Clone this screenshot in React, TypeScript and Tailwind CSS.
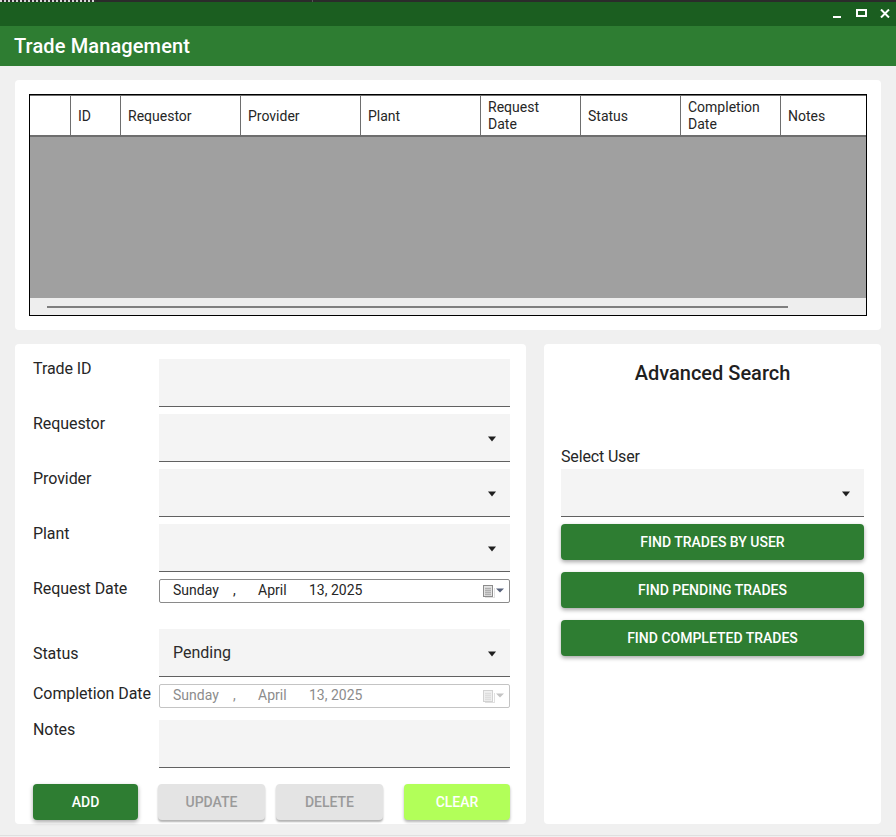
const columns = [
  { label: '', width: 'w-[41px]' },
  { label: 'ID', width: 'w-[50px]' },
  { label: 'Requestor', width: 'w-[120px]' },
  { label: 'Provider', width: 'w-[120px]' },
  { label: 'Plant', width: 'w-[120px]' },
  { label: 'Request Date', width: 'w-[100px]' },
  { label: 'Status', width: 'w-[100px]' },
  { label: 'Completion Date', width: 'w-[100px]' },
  { label: 'Notes', width: 'w-[85px]' },
];

function Caret() {
  return (
    <svg width="10" height="6" viewBox="0 0 10 6" className="shrink-0 mt-[2px]">
      <path d="M1 0.5h8L5 5.5z" fill="#1f1f1f" />
    </svg>
  );
}

function TextField() {
  return <div className="h-[48px] w-[351px] bg-[#f4f4f4] border-b border-[#616161]" />;
}

function ComboBox({ value, wide }: { value?: string; wide?: boolean }) {
  return (
    <div
      className={`h-[48px] ${
        wide ? 'w-[303px]' : 'w-[351px]'
      } bg-[#f4f4f4] border-b border-[#616161] flex items-center justify-between pl-[14px] pr-[13px]`}
    >
      <span className="text-[16px] text-[#2b2b2b]">{value}</span>
      <Caret />
    </div>
  );
}

function CalendarIcon({ disabled }: { disabled?: boolean }) {
  const stroke = disabled ? '#d2d2d2' : '#8c8c8c';
  const fill = disabled ? '#f0f0f0' : '#e4e4e4';
  const grid = disabled ? '#dcdcdc' : '#a8a8a8';
  const arrow = disabled ? '#c4c4c4' : '#56607a';
  return (
    <svg width="21" height="14" viewBox="0 0 21 14" className="shrink-0">
      <path d="M2 13.5h9.5V4" fill="none" stroke="#000" strokeOpacity="0.12" />
      <rect x="0.5" y="1.5" width="9" height="11" fill={fill} stroke={stroke} />
      <path d="M2 4.5h6M2 6.5h6M2 8.5h6M2 10.5h6M3 3.5v8M5 3.5v8M7 3.5v8" stroke={grid} strokeWidth="0.8" />
      <path d="M13 4.5h8l-4 4z" fill={arrow} />
    </svg>
  );
}

function DateField({ disabled }: { disabled?: boolean }) {
  return (
    <div
      className={`h-[24px] w-[351px] bg-white border rounded-[2px] flex items-center justify-between pl-[13px] pr-[5px] text-[14px] ${
        disabled ? 'border-[#c4c4c4] text-[#8c8c8c]' : 'border-[#8a8a8a] text-[#262626]'
      }`}
    >
      <div className="flex -mt-[2px]">
        <span className="w-[60px]">Sunday</span>
        <span className="w-[25px]">,</span>
        <span className="w-[51px]">April</span>
        <span>13, 2025</span>
      </div>
      <CalendarIcon disabled={disabled} />
    </div>
  );
}

function GreenButton({ label }: { label: string }) {
  return (
    <button className="h-[36px] w-[303px] rounded-[4px] bg-[#2e7d32] text-white text-[14px] font-medium shadow-[0_2px_4px_rgba(0,0,0,0.35)]">
      {label}
    </button>
  );
}

function FormLabel({ children }: { children: string }) {
  return <span className="w-[126px] leading-[19px] tracking-[-0.07px]">{children}</span>;
}

export default function App() {
  return (
    <div className="w-[896px] h-[837px] overflow-hidden bg-[#f0f0f0] flex flex-col font-['Roboto',sans-serif] text-[#262626]">
      {/* Title bar */}
      <div className="h-[2px] bg-[#2b2b2b] flex">
        <div className="w-[94px] border-t-2 border-dotted border-[#d8d8d8]" />
        <div className="w-[218px]" />
        <div className="w-px bg-[#555555]" />
      </div>
      <div className="h-[24px] bg-[#1b5e20] flex items-start justify-end pt-[7px] pr-[6px]">
        <svg width="8" height="9" viewBox="0 0 8 9" className="mr-[15px]">
          <path d="M0 8h8" stroke="#fff" strokeWidth="2" />
        </svg>
        <svg width="11" height="8" viewBox="0 0 11 8" className="mr-[13px]">
          <rect x="1" y="1" width="9" height="6" fill="none" stroke="#fff" strokeWidth="2" />
        </svg>
        <svg width="10" height="9" viewBox="0 0 10 9">
          <path d="M1 0.5l8 8M9 0.5l-8 8" stroke="#fff" strokeWidth="2" />
        </svg>
      </div>
      <div className="h-[40px] bg-[#2e7d32] flex items-center pl-[14px]">
        <h1 className="text-[20px] font-medium text-white tracking-[0.12px]">Trade Management</h1>
      </div>

      {/* Trades table */}
      <div className="mt-[14px] ml-[15px] w-[866px] h-[250px] bg-white rounded-[4px] pt-[14px] pl-[14px]">
        <div className="w-[838px] h-[222px] border border-black flex flex-col">
          <div className="h-[42px] flex border-t border-b-2 border-[#6e6e6e]">
            {columns.map((col, i) => (
              <div
                key={i}
                className={`${col.width} flex items-center pl-[7px] pr-[12px] pt-px text-[14px] leading-[17px] text-[#262626] border-r border-[#6e6e6e] last:border-r-0`}
              >
                {col.label}
              </div>
            ))}
          </div>
          <div className="flex-1 bg-[#a0a0a0]" />
          <div className="h-[17px] bg-[#eeeeee] flex items-center pl-[17px]">
            <div className="w-[741px] h-[2px] bg-[#7f7f7f]" />
          </div>
        </div>
      </div>

      <div className="mt-[14px] ml-[15px] flex gap-[18px]">
        {/* Trade form */}
        <div className="w-[511px] h-[480px] bg-white rounded-[4px] pt-[15px] pl-[18px] text-[16px]">
          <div className="flex">
            <FormLabel>Trade ID</FormLabel>
            <TextField />
          </div>
          <div className="flex mt-[7px]">
            <FormLabel>Requestor</FormLabel>
            <ComboBox />
          </div>
          <div className="flex mt-[7px]">
            <FormLabel>Provider</FormLabel>
            <ComboBox />
          </div>
          <div className="flex mt-[7px]">
            <FormLabel>Plant</FormLabel>
            <ComboBox />
          </div>
          <div className="flex mt-[7px]">
            <FormLabel>Request Date</FormLabel>
            <DateField />
          </div>
          <div className="flex items-center mt-[26px]">
            <FormLabel>Status</FormLabel>
            <ComboBox value="Pending" />
          </div>
          <div className="flex mt-[7px]">
            <FormLabel>Completion Date</FormLabel>
            <DateField disabled />
          </div>
          <div className="flex mt-[12px]">
            <FormLabel>Notes</FormLabel>
            <TextField />
          </div>
          <div className="flex mt-[16px]">
            <button className="w-[105px] h-[36px] rounded-[4px] bg-[#2e7d32] text-white text-[14px] font-medium shadow-[0_2px_4px_rgba(0,0,0,0.35)]">
              ADD
            </button>
            <button className="ml-[20px] w-[107px] h-[36px] rounded-[4px] bg-[#e4e4e4] text-[#9a9a9a] text-[14px] font-medium shadow-[0_2px_2px_rgba(0,0,0,0.3)]">
              UPDATE
            </button>
            <button className="ml-[11px] w-[107px] h-[36px] rounded-[4px] bg-[#e4e4e4] text-[#9a9a9a] text-[14px] font-medium shadow-[0_2px_2px_rgba(0,0,0,0.3)]">
              DELETE
            </button>
            <button className="ml-[21px] w-[106px] h-[36px] rounded-[4px] bg-[#b2ff59] text-white text-[14px] font-medium shadow-[0_2px_3px_rgba(0,0,0,0.3)]">
              CLEAR
            </button>
          </div>
        </div>

        {/* Advanced search */}
        <div className="w-[337px] h-[480px] bg-white rounded-[4px] pt-[17px] pl-[17px] text-[16px]">
          <h2 className="w-[303px] text-center text-[20px] font-medium leading-[24px] text-[#1f1f1f]">
            Advanced Search
          </h2>
          <div className="mt-[62px] leading-[19px] tracking-[-0.15px]">Select User</div>
          <div className="mt-[3px]">
            <ComboBox wide />
          </div>
          <div className="mt-[7px] flex flex-col gap-[12px]">
            <GreenButton label="FIND TRADES BY USER" />
            <GreenButton label="FIND PENDING TRADES" />
            <GreenButton label="FIND COMPLETED TRADES" />
          </div>
        </div>
      </div>

      {/* Window bottom edge */}
      <div className="mt-[11px] h-px bg-[#e0e0e0]" />
    </div>
  );
}
